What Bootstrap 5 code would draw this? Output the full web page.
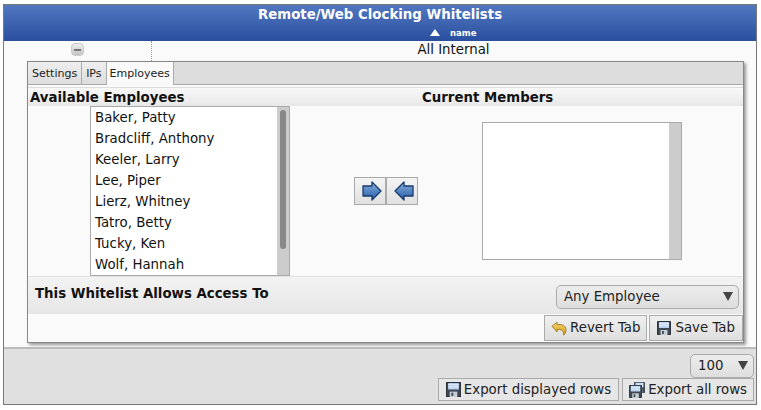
<!DOCTYPE html>
<html lang="en">
<head>
    <meta charset="UTF-8">
    <title>Remote/Web Clocking Whitelists</title>
    <meta name="viewport" content="width=device-width, initial-scale=1">
    <link href="https://cdn.jsdelivr.net/npm/bootstrap@5.3.0/dist/css/bootstrap.min.css" rel="stylesheet">
    <style>
        body {
            background: #fff;
            color: #111;
            font-family: "DejaVu Sans", sans-serif;
            font-size: 13.33px;
            line-height: 1;
            overflow: hidden;
        }
        .win {
            margin: 4px 4px 0 3px;
            height: 401px;
            border: 1px solid #777;
            background: #fafafa;
            display: flex;
            flex-direction: column;
        }
        .win-head {
            height: 36px;
            background: linear-gradient(#5277c0, #2a4f9f);
            color: #fff;
            font-weight: 700;
        }
        .win-title { padding-top: 3px; text-align: center; }
        .sort-row { gap: 10px; padding: 8px 0 0 426px; font-size: 8.5px; align-items: center; }
        .sort-up { width: 0; height: 0; border: 5px solid transparent; border-top: 0; border-bottom: 7px solid #fff; margin-top: -3px; }
        .data-row { height: 20px; }
        .cell-toggle { width: 148px; height: 20px; border-right: 1px dotted #999; }
        .toggle-btn {
            width: 13px; height: 13px; margin: 2px 0 0 0; border-radius: 4px;
            background: linear-gradient(#eee, #c4c4c4); border: 1px solid #ccc;
            display: flex; align-items: center; justify-content: center;
        }
        .toggle-btn::before { content: ""; width: 7px; height: 2px; background: #777; }
        .cell-name { flex: 1; text-align: center; padding: 2px 1px 0 0; }
        .panel {
            margin-left: 23px;
            width: 717px;
            height: 282px;
            border: 1px solid #888;
            background: #fafafa;
            box-shadow: 2px 2px 3px rgba(0,0,0,.4);
            display: flex;
            flex-direction: column;
        }
        .tab-strip { height: 23px; background: #ddd; border-bottom: 1px solid #aaa; flex: none; }
        .tab-item { font-size: 11px; padding: 6px 4px 0 4px; color: #222; border-right: 1px solid #aaa; background: linear-gradient(#eee, #ddd); height: 22px; }
        .tab-item.on { background: #fafafa; height: 23px; padding: 6px 3px 0 3px; }
        .sect-head {
            margin-top: 2px; height: 19px; font-weight: 700; flex: none;
            border-top: 1px solid #ddd;
            background: linear-gradient(#f8f8f8, #e8e8e8);
        }
        .sect-left { width: 394px; padding: 3px 0 0 2px; }
        .sect-right { padding: 3px 0 0 0; }
        .transfer { height: 171px; flex: none; border-bottom: 1px solid #e2e2e2; }
        .list-box {
            width: 200px; height: 170px; margin-left: 62px; flex: none;
            border: 1px solid #aaa; background: #fff; position: relative;
        }
        .list-item { height: 21px; padding: 4px 0 0 4px; white-space: nowrap; }
        .list-wrap { height: 168px; }
        .scroll-track { position: absolute; top: 0; right: 0; bottom: 0; width: 12px; background: #ccc; }
        .scroll-thumb { position: absolute; top: 3px; left: 3px; width: 6px; height: 139px; border-radius: 3px; background: #888; }
        .arrows { margin: 71px 0 0 64px; flex: none; height: 28px; }
        .arrow-btn {
            width: 32px; height: 28px; padding: 0 0 0 4px; border: 1px solid #aaa;
            background: linear-gradient(#f4f4f4, #e0e0e0);
            display: flex; align-items: center; justify-content: center;
        }
        .member-box { width: 200px; height: 138px; margin: 16px 0 0 64px; flex: none; }
        .access-row {
            height: 37px; flex: none; font-weight: 700;
            background: linear-gradient(#f3f3f3, #e6e6e6);
            padding: 8px 4px 0 7px;
        }
        .access-label { padding-top: 2px; }
        .fake-select {
            border: 1px solid #aaa; border-radius: 5px; color: #222; font-weight: 400;
            background: linear-gradient(#ececec, #dedede);
            height: 24px; padding: 4px 5px 0 7px; flex: none;
        }
        .fake-select::after { content: ""; border: 5px solid transparent; border-bottom: 0; border-top: 9px solid #444; margin-top: 2px; }
        .sel-any { width: 183px; }
        .sel-size { width: 64px; }
        .tool-btn {
            border: 1px solid #aaa; background: linear-gradient(#f0f0f0, #dedede);
            color: #222; height: 26px; padding: 0 6px; gap: 3px; font-size: 13.33px;
            display: flex; align-items: center; white-space: nowrap;
        }
        .btn-save { padding: 0 7px; gap: 4px; }
        .btn-shown { padding: 0 7px; }
        .tab-actions { padding: 1px 0 0 0; gap: 2px; }
        .foot {
            flex: 1; margin-top: 4px; border-top: 2px solid #bbb; background: #e0e0e0;
            padding: 5px 2px 0 0;
        }
        .foot .tool-btn { height: 23px; background: #e6e6e6; }
        .foot-exports { gap: 3px; }
    </style>
</head>
<body>
<svg width="0" height="0" class="position-absolute">
    <defs>
        <linearGradient id="blueArrow" x1="0" y1="0" x2="0" y2="1">
            <stop offset="0" stop-color="#8fb0da"/>
            <stop offset=".55" stop-color="#4f82c0"/>
            <stop offset="1" stop-color="#2c5c9c"/>
        </linearGradient>
        <linearGradient id="goldArrow" x1="0" y1="0" x2="0" y2="1">
            <stop offset="0" stop-color="#f6d768"/>
            <stop offset="1" stop-color="#d29a1c"/>
        </linearGradient>
        <symbol id="floppy" viewBox="0 0 14 14">
            <path d="M0.500 0.500h13v13h-13z" fill="#3f4a55" stroke="#2c333b"/>
            <path d="M2 1h10v6h-10z" fill="#b9d2ef"/>
            <path d="M2 2.500h10M2 4.500h10" stroke="#eaf2fb" stroke-width=".8"/>
            <path d="M3.500 9h7v5h-7z" fill="#c9ced4"/>
            <path d="M5 10h1.800v3h-1.800z" fill="#3f4a55"/>
        </symbol>
    </defs>
</svg>
<div class="win">
    <div class="win-head">
        <div class="win-title">Remote/Web Clocking Whitelists</div>
        <div class="sort-row d-flex"><span class="sort-up"></span><span>name</span></div>
    </div>
    <div class="data-row d-flex">
        <div class="cell-toggle d-flex justify-content-center"><span class="toggle-btn"></span></div>
        <div class="cell-name">All Internal</div>
    </div>
    <div class="panel">
        <div class="tab-strip d-flex">
            <div class="tab-item">Settings</div>
            <div class="tab-item">IPs</div>
            <div class="tab-item on">Employees</div>
        </div>
        <div class="sect-head d-flex">
            <div class="sect-left">Available Employees</div>
            <div class="sect-right">Current Members</div>
        </div>
        <div class="transfer d-flex">
            <div class="list-box">
                <div class="list-wrap">
                    <div class="list-item">Baker, Patty</div>
                    <div class="list-item">Bradcliff, Anthony</div>
                    <div class="list-item">Keeler, Larry</div>
                    <div class="list-item">Lee, Piper</div>
                    <div class="list-item">Lierz, Whitney</div>
                    <div class="list-item">Tatro, Betty</div>
                    <div class="list-item">Tucky, Ken</div>
                    <div class="list-item">Wolf, Hannah</div>
                </div>
                <div class="scroll-track"><div class="scroll-thumb"></div></div>
            </div>
            <div class="arrows d-flex">
                <button type="button" class="arrow-btn">
                    <svg width="20" height="20" viewBox="0 0 20 20"><path d="M1 5h9v-4l9 9-9 9v-4h-9z" fill="url(#blueArrow)" stroke="#173a6e" stroke-width="1.300" stroke-linejoin="round"/></svg>
                </button>
                <button type="button" class="arrow-btn">
                    <svg width="20" height="20" viewBox="0 0 20 20"><path d="M19 5h-9v-4l-9 9 9 9v-4h9z" fill="url(#blueArrow)" stroke="#173a6e" stroke-width="1.300" stroke-linejoin="round"/></svg>
                </button>
            </div>
            <div class="list-box member-box">
                <div class="scroll-track"></div>
            </div>
        </div>
        <div class="access-row d-flex justify-content-between">
            <span class="access-label">This Whitelist Allows Access To</span>
            <div class="fake-select sel-any d-flex justify-content-between">Any Employee</div>
        </div>
        <div class="tab-actions d-flex justify-content-end">
            <button type="button" class="tool-btn">
                <svg width="16" height="15" viewBox="0 0 17 15"><path d="M1 5l5.500-4.200v2.700c5-1 9.500 1 9.500 5.500 0 2-1 4-2.500 5.500 .3-4-2-6.500-7-6v2.700z" fill="url(#goldArrow)" stroke="#8f6a10" stroke-width=".8"/></svg>
                Revert Tab
            </button>
            <button type="button" class="tool-btn btn-save">
                <svg width="14" height="14"><use href="#floppy"/></svg>
                Save Tab
            </button>
        </div>
    </div>
    <div class="foot">
        <div class="d-flex justify-content-end"><div class="fake-select sel-size d-flex justify-content-between">100</div></div>
        <div class="foot-exports d-flex justify-content-end">
            <button type="button" class="tool-btn btn-shown">
                <svg width="15" height="15"><use href="#floppy"/></svg>
                Export displayed rows
            </button>
            <button type="button" class="tool-btn">
                <svg width="16" height="16" viewBox="0 0 16 16"><use href="#floppy" x="5" y="0" width="11" height="11"/><use href="#floppy" x="0" y="3" width="13" height="13"/></svg>
                Export all rows
            </button>
        </div>
    </div>
</div>
<script src="https://cdn.jsdelivr.net/npm/bootstrap@5.3.0/dist/js/bootstrap.bundle.min.js"></script>
</body>
</html>
